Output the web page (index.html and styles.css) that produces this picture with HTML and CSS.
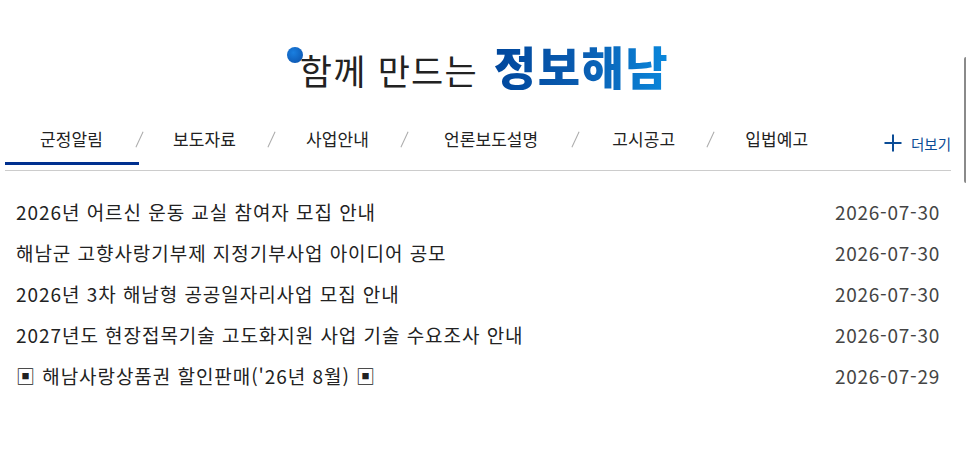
FILE: index.html
```html
<!DOCTYPE html>
<html lang="ko">

<head>
    <meta charset="UTF-8">
    <meta name="viewport" content="width=device-width, initial-scale=1.0">
    <title>함께 만드는 정보해남</title>
    <link rel="stylesheet" href="styles.css">
</head>

<body>

    <div class="scroll_thumb"></div>

    <h2 class="logo">
        <span class="logo_lead"><span class="logo_dot"></span>함께 만드는</span>
        <span class="logo_name">정보해남</span>
    </h2>

    <div class="tabs_row">
        <ul class="tabs">
            <li class="tab active">군정알림</li>
            <li class="tab">보도자료</li>
            <li class="tab">사업안내</li>
            <li class="tab tab_wide">언론보도설명</li>
            <li class="tab tab_next">고시공고</li>
            <li class="tab">입법예고</li>
        </ul>
        <a class="more" href="#">
            <svg class="more_icon" width="18" height="18" viewBox="0 0 18 18">
                <path d="M9 0.500V17.500M0.500 9H17.500" stroke="#0b4c96" stroke-width="2" fill="none" />
            </svg>
            더보기
        </a>
    </div>

    <ul class="news">
        <li class="news_item"><span>2026년 어르신 운동 교실 참여자 모집 안내</span><span class="date">2026-07-30</span></li>
        <li class="news_item"><span>해남군 고향사랑기부제 지정기부사업 아이디어 공모</span><span class="date">2026-07-30</span></li>
        <li class="news_item"><span>2026년 3차 해남형 공공일자리사업 모집 안내</span><span class="date">2026-07-30</span></li>
        <li class="news_item"><span>2027년도 현장접목기술 고도화지원 사업 기술 수요조사 안내</span><span class="date">2026-07-30</span></li>
        <li class="news_item"><span>▣ 해남사랑상품권 할인판매('26년 8월) ▣</span><span class="date">2026-07-29</span></li>
    </ul>

</body>

</html>
```

FILE: styles.css
```css
html, body {
    margin: 0;
    padding: 0;
    background: #fff;
    overflow: hidden;
}

body {
    height: 468px;
    font-family: "Noto Sans CJK KR", "Noto Sans", sans-serif;
    color: #222;
}

/* overlay scrollbar at the window edge */
.scroll_thumb {
    position: absolute;
    top: 57px;
    right: 0;
    width: 2px;
    height: 126px;
    border-radius: 2px 0 0 2px;
    background: #8a8a8a;
}

.logo {
    display: flex;
    justify-content: center;
    align-items: center;
    gap: 16px;
    height: 50px;
    margin: 0;
    padding: 42px 0 0;
    font-weight: 400;
}

.logo_lead {
    position: relative;
    font-size: 35px;
    line-height: 50px;
    letter-spacing: 1.2px;
    color: #222;
    padding: 5px 0 0 3px;
}

.logo_dot {
    position: absolute;
    top: 7px;
    left: -10px;
    width: 16px;
    height: 16px;
    border-radius: 50%;
    background: radial-gradient(circle at 40% 35%, #1a7fe0, #0a4fa8);
}

.logo_name {
    font-size: 46px;
    line-height: 50px;
    font-weight: 900;
    letter-spacing: 1.500px;
    margin-top: -4px;
    background: linear-gradient(90deg, #00479d 0%, #0a5cb0 50%, #0a88dc 100%);
    -webkit-background-clip: text;
    background-clip: text;
    color: transparent;
}

.tabs_row {
    display: flex;
    justify-content: space-between;
    height: 79px;
    margin: 0 15px 0 5px;
    border-bottom: 1px solid #ccc;
    box-sizing: border-box;
}

.tabs {
    display: flex;
    margin: 0;
    padding: 20px 0 0;
    list-style: none;
}

.tab {
    position: relative;
    height: 53px;
    padding: 9px 35px 0;
    font-size: 17px;
    line-height: 36px;
    letter-spacing: 0.1px;
    box-sizing: border-box;
}

.tab::after {
    content: "";
    position: absolute;
    top: 19px;
    right: -1px;
    width: 1px;
    height: 17px;
    background: #aaa;
    transform: rotate(25deg);
}

.tab:last-child::after {
    display: none;
}

.tab.active {
    border-bottom: 3px solid #00308f;
    padding-right: 36px;
    margin-right: -1px;
}

.tab_wide {
    padding-left: 40px;
    padding-right: 37px;
}

.tab_next {
    padding-left: 37px;
}

.more {
    display: flex;
    align-items: center;
    gap: 9px;
    height: 24px;
    margin-top: 39px;
    font-size: 14.500px;
    color: #0b4c96;
    text-decoration: none;
}

.more_icon {
    display: block;
}

.news {
    margin: 20px 26px 0 16px;
    padding: 0;
    list-style: none;
}

.news_item {
    display: flex;
    justify-content: space-between;
    height: 41px;
    font-size: 19px;
    line-height: 41px;
    letter-spacing: 0.95px;
    color: #222;
}

.date {
    letter-spacing: 0.75px;
    color: #444;
}
```
